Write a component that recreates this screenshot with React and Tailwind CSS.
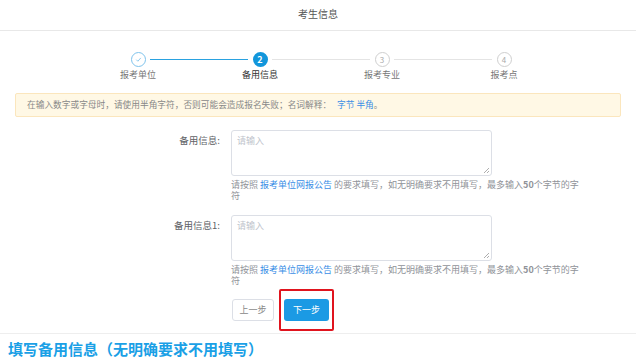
export default function App() {
  const steps = [
    { n: 1, label: '报考单位', state: 'done' },
    { n: 2, label: '备用信息', state: 'active' },
    { n: 3, label: '报考专业', state: 'todo' },
    { n: 4, label: '报考点', state: 'todo' },
  ];

  const Field = ({ label }) => (
    <div className="flex">
      <div className="w-[222px] shrink-0 pr-[2px] pt-[3px] text-right text-[9.5px] text-[#606266]">{label}</div>
      <div className="ml-[9px] w-[360px]">
        <div className="relative h-[46px] w-[261px] rounded-[3px] border border-[#dcdfe6] bg-white">
          <span className="absolute left-[5px] top-[3px] text-[9px] text-[#c0c4cc]">请输入</span>
          <svg className="absolute bottom-[2px] right-[2px] h-[6px] w-[6px]" viewBox="0 0 6 6">
            <path d="M6 1L1 6M6 4L4 6" stroke="#999" strokeWidth="0.8" />
          </svg>
        </div>
        <p className="mt-[3px] w-[354px] text-[9px] leading-[11px] text-[#909399]">
          请按照 <span className="text-[#3a8ee6]">报考单位网报公告</span> 的要求填写，如无明确要求不用填写，最多输入<b className="font-bold">50</b>个字节的字符
        </p>
      </div>
    </div>
  );

  return (
    <div className="h-[362px] w-[636px] overflow-hidden bg-white font-['Noto_Sans_CJK_SC',sans-serif]">
      <header className="flex h-[31px] items-center justify-center border-b border-[#e8e8e8] pb-[3px] text-[10px] text-[#555]">
        考生信息
      </header>

      <div className="ml-[77px] flex pt-[21px]">
        {steps.map((s, i) => (
          <div key={s.n} className="relative flex w-[122px] shrink-0 flex-col items-center">
            {i < steps.length - 1 && (
              <div
                className={`absolute left-[73px] top-[7px] h-px w-[98px] ${s.state === 'done' ? 'bg-[#2aa2e0]' : 'bg-[#e4e4e4]'}`}
              />
            )}
            {s.state === 'done' && (
              <div className="flex h-[15px] w-[15px] items-center justify-center rounded-full border border-[#7ec3ec] bg-white">
                <svg className="h-[7px] w-[7px]" viewBox="0 0 8 8">
                  <path d="M1.5 4.2L3.3 6L6.6 2.2" fill="none" stroke="#7ec3ec" strokeWidth="1" />
                </svg>
              </div>
            )}
            {s.state === 'active' && (
              <div className="flex h-[15px] w-[15px] items-center justify-center rounded-full bg-[#1296db] text-[9px] font-bold leading-none text-white">
                {s.n}
              </div>
            )}
            {s.state === 'todo' && (
              <div className="flex h-[15px] w-[15px] items-center justify-center rounded-full border border-[#cfcfcf] bg-white text-[8px] leading-none text-[#aaa]">
                {s.n}
              </div>
            )}
            <span className={`mt-[1px] text-[9px] leading-[13px] ${s.state === 'active' ? 'text-[#333]' : 'text-[#777]'}`}>
              {s.label}
            </span>
          </div>
        ))}
      </div>

      <div className="mx-[15px] mt-[12px] flex h-[24px] items-center rounded-[2px] border border-[#fbe6bd] bg-[#fff8e5] px-[11px] text-[8.7px] text-[#888]">
        在输入数字或字母时，请使用半角字符，否则可能会造成报名失败；名词解释：
        <span className="ml-[6px] text-[#3a8ee6]">字节 半角</span>。
      </div>

      <div className="mt-[13px] flex flex-col gap-[14px]">
        <Field label="备用信息:" />
        <Field label="备用信息1:" />
      </div>

      <div className="ml-[232px] mt-[3px] flex items-center gap-[5px]">
        <button className="h-[22px] w-[42px] rounded-[3px] border border-[#dcdfe6] bg-white text-[9px] text-[#888]">上一步</button>
        <div className="rounded-[2px] border-2 border-[#e0141e] px-[3px] py-[8px]">
          <button className="block h-[22px] w-[45px] rounded-[3px] bg-[#1b9ae4] text-[9px] text-white">下一步</button>
        </div>
      </div>

      <div className="mt-[2px] border-t border-[#eee] pl-[8px] pt-[6px] text-[15px] font-bold leading-[18px] text-[#1aa0e6]">
        填写备用信息（无明确要求不用填写）
      </div>
    </div>
  );
}
